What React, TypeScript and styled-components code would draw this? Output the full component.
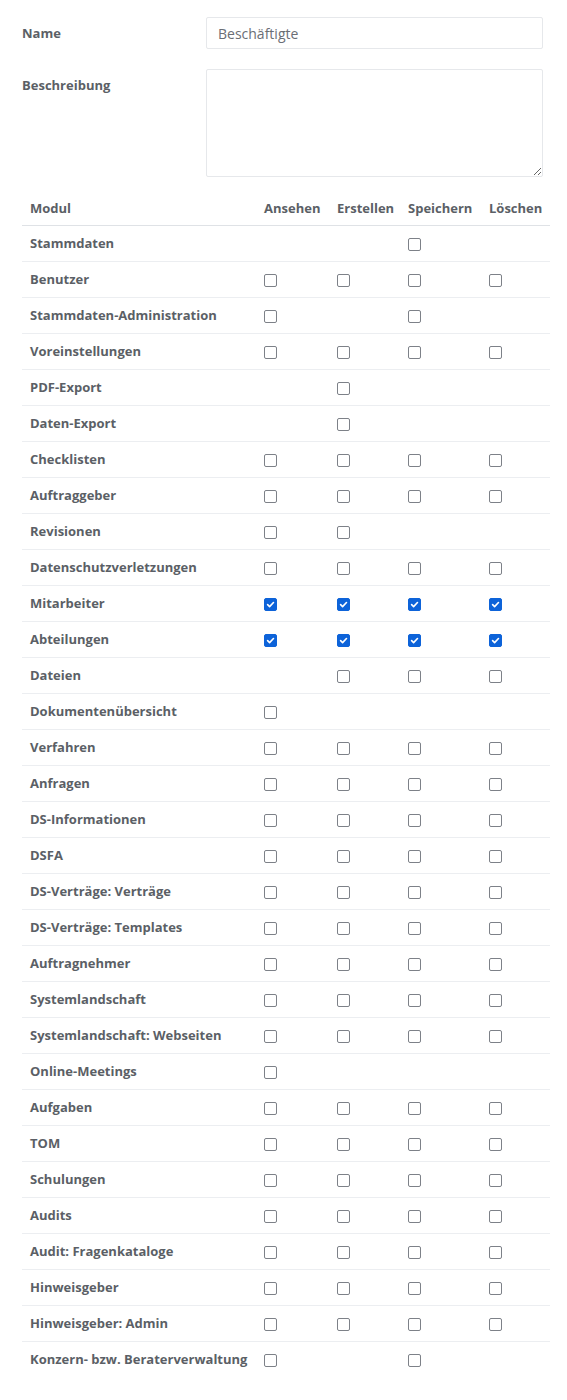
import React from 'react';
import styled, { createGlobalStyle } from 'styled-components';

const GlobalStyle = createGlobalStyle`
  body {
    margin: 0;
    background: #fff;
    font-family: 'Open Sans', 'Noto Sans', sans-serif;
    color: #5b5f66;
  }
`;

const Page = styled.div`
  padding: 17px 17px 30px 22px;
`;

const FormRow = styled.div`
  display: grid;
  grid-template-columns: 184px 337px;
  margin-bottom: 20px;
`;

const Label = styled.label`
  font-size: 13px;
  font-weight: 700;
  line-height: 18px;
  padding-top: 7px;
  color: #5b5f66;
`;

const TextInput = styled.input`
  box-sizing: border-box;
  height: 32px;
  width: 100%;
  border: 1px solid #e6e8eb;
  border-radius: 2px;
  padding: 0 11px;
  font-family: inherit;
  font-size: 14px;
  color: #6a6e75;
  outline: none;
`;

const TextArea = styled.textarea`
  box-sizing: border-box;
  height: 108px;
  width: 100%;
  border: 1px solid #e6e8eb;
  border-radius: 2px;
  padding: 8px 11px;
  font-family: inherit;
  font-size: 14px;
  resize: vertical;
  display: block;
  outline: none;
`;

const Table = styled.table`
  width: 528px;
  border-collapse: collapse;
  table-layout: fixed;
  margin-top: -6px;
`;

const Th = styled.th`
  text-align: left;
  font-size: 13px;
  font-weight: 700;
  padding: 0 8px 1px;
  height: 33px;
  border-bottom: 1px solid #dfe2e6;
  white-space: nowrap;
  color: #5b5f66;
`;

const Td = styled.td`
  font-size: 13px;
  font-weight: 700;
  padding: 0 8px 2px;
  height: 33px;
  border-bottom: 1px solid #eceef1;
  white-space: nowrap;
  vertical-align: middle;
  color: #5b5f66;
`;

const Row = styled.tr<{ $last?: boolean }>`
  & > td {
    border-bottom-color: ${(p) => (p.$last ? 'transparent' : '#eceef1')};
  }
`;

const Box = styled.span<{ $checked: boolean }>`
  display: inline-flex;
  align-items: center;
  justify-content: center;
  box-sizing: border-box;
  width: 13px;
  height: 13px;
  border-radius: 2px;
  border: 1px solid ${(p) => (p.$checked ? '#0d63d9' : '#7d8188')};
  background: ${(p) => (p.$checked ? '#0d63d9' : '#fff')};
  vertical-align: middle;
`;

function Check({ checked }: { checked: boolean }) {
  return (
    <Box $checked={checked}>
      {checked && (
        <svg width="9" height="9" viewBox="0 0 10 10">
          <path d="M1.8 5.2 L4 7.3 L8.3 2.8" fill="none" stroke="#fff" strokeWidth="1.8" strokeLinecap="round" strokeLinejoin="round" />
        </svg>
      )}
    </Box>
  );
}

// 0 = none, 1 = unchecked, 2 = checked  [Ansehen, Erstellen, Speichern, Löschen]
const rows: [string, number[]][] = [
  ['Stammdaten', [0, 0, 1, 0]],
  ['Benutzer', [1, 1, 1, 1]],
  ['Stammdaten-Administration', [1, 0, 1, 0]],
  ['Voreinstellungen', [1, 1, 1, 1]],
  ['PDF-Export', [0, 1, 0, 0]],
  ['Daten-Export', [0, 1, 0, 0]],
  ['Checklisten', [1, 1, 1, 1]],
  ['Auftraggeber', [1, 1, 1, 1]],
  ['Revisionen', [1, 1, 0, 0]],
  ['Datenschutzverletzungen', [1, 1, 1, 1]],
  ['Mitarbeiter', [2, 2, 2, 2]],
  ['Abteilungen', [2, 2, 2, 2]],
  ['Dateien', [0, 1, 1, 1]],
  ['Dokumentenübersicht', [1, 0, 0, 0]],
  ['Verfahren', [1, 1, 1, 1]],
  ['Anfragen', [1, 1, 1, 1]],
  ['DS-Informationen', [1, 1, 1, 1]],
  ['DSFA', [1, 1, 1, 1]],
  ['DS-Verträge: Verträge', [1, 1, 1, 1]],
  ['DS-Verträge: Templates', [1, 1, 1, 1]],
  ['Auftragnehmer', [1, 1, 1, 1]],
  ['Systemlandschaft', [1, 1, 1, 1]],
  ['Systemlandschaft: Webseiten', [1, 1, 1, 1]],
  ['Online-Meetings', [1, 0, 0, 0]],
  ['Aufgaben', [1, 1, 1, 1]],
  ['TOM', [1, 1, 1, 1]],
  ['Schulungen', [1, 1, 1, 1]],
  ['Audits', [1, 1, 1, 1]],
  ['Audit: Fragenkataloge', [1, 1, 1, 1]],
  ['Hinweisgeber', [1, 1, 1, 1]],
  ['Hinweisgeber: Admin', [1, 1, 1, 1]],
  ['Konzern- bzw. Beraterverwaltung', [1, 0, 1, 0]],
];

const columns = ['Ansehen', 'Erstellen', 'Speichern', 'Löschen'];
const widths = [234, 73, 71, 81, 69];

export default function App() {
  return (
    <>
      <GlobalStyle />
      <Page>
        <FormRow>
          <Label>Name</Label>
          <TextInput defaultValue="Beschäftigte" />
        </FormRow>
        <FormRow>
          <Label>Beschreibung</Label>
          <TextArea />
        </FormRow>
        <Table>
          <colgroup>
            {widths.map((w, i) => (
              <col key={i} style={{ width: w }} />
            ))}
          </colgroup>
          <thead>
            <tr>
              <Th>Modul</Th>
              {columns.map((c) => (
                <Th key={c}>{c}</Th>
              ))}
            </tr>
          </thead>
          <tbody>
            {rows.map(([name, cells], i) => (
              <Row key={name} $last={i === rows.length - 1}>
                <Td>{name}</Td>
                {cells.map((v, j) => (
                  <Td key={j}>{v > 0 && <Check checked={v === 2} />}</Td>
                ))}
              </Row>
            ))}
          </tbody>
        </Table>
      </Page>
    </>
  );
}
